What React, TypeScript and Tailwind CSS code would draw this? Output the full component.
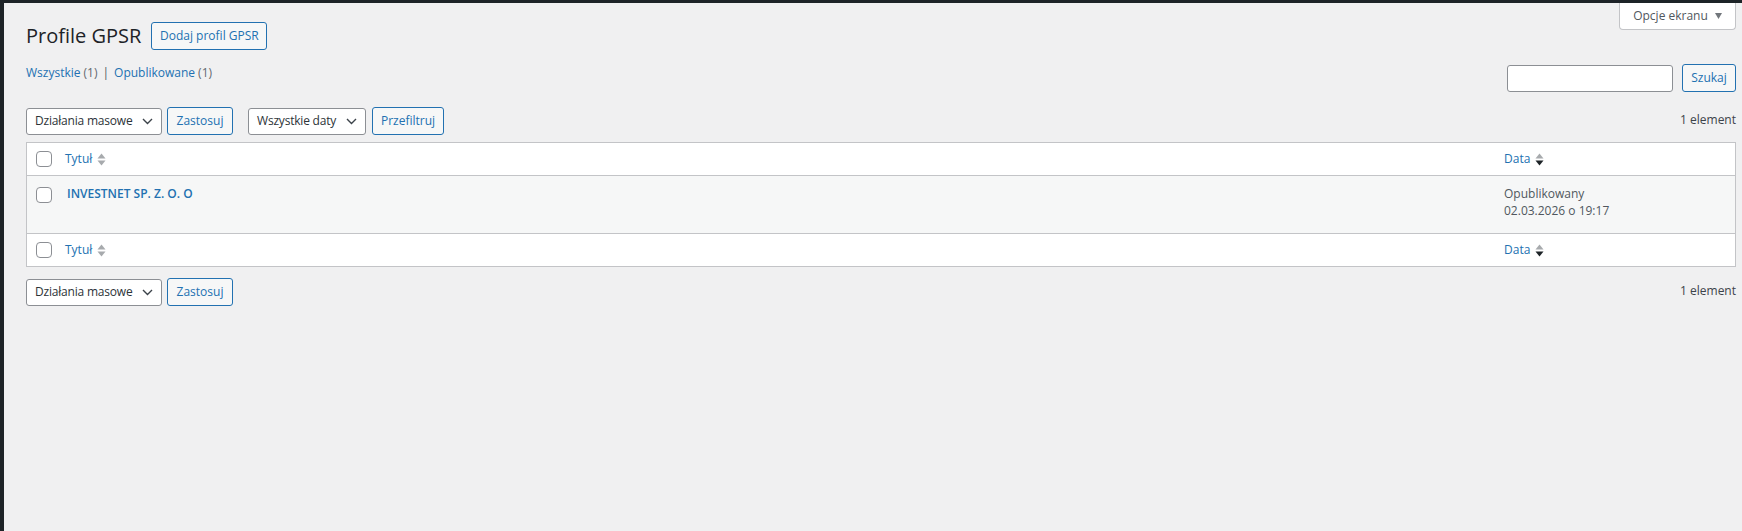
import React from "react";

function SortIcon({ active }: { active?: boolean }) {
  return (
    <svg width="9" height="13" viewBox="0 0 9 13" className="ml-[5px] shrink-0">
      <path d="M4.5 0.5 L8.5 5.5 H0.5 Z" fill="#a7aaad" />
      <path d="M4.5 12.5 L8.5 7.5 H0.5 Z" fill={active ? "#1d2327" : "#a7aaad"} />
    </svg>
  );
}

function Chevron() {
  return (
    <svg width="11" height="7" viewBox="0 0 11 7" className="shrink-0">
      <path d="M1 1 L5.5 5.5 L10 1" fill="none" stroke="#3c434a" strokeWidth="1.4" />
    </svg>
  );
}

function Checkbox() {
  return <span className="block w-[16px] h-[16px] rounded-[4px] border border-[#8c8f94] bg-white" />;
}

function SelectBox({ label, width }: { label: string; width: string }) {
  return (
    <div
      className={`${width} h-[27px] flex items-center justify-between pl-[8px] pr-[8px] bg-white border border-[#8c8f94] rounded-[3px] text-[12px] tracking-[-0.2px] text-[#2c3338] whitespace-nowrap`}
    >
      <span>{label}</span>
      <Chevron />
    </div>
  );
}

function Button({ label, width }: { label: string; width: string }) {
  return (
    <button
      className={`${width} h-[28px] flex items-center justify-center bg-[#f6f7f7] border border-[#2271b1] rounded-[3px] text-[12px] text-[#2271b1] whitespace-nowrap`}
    >
      {label}
    </button>
  );
}

function TableRow({ footer }: { footer?: boolean }) {
  return (
    <div className={`flex h-[33px] items-center bg-white ${footer ? "border-t" : "border-b"} border-[#c3c4c7]`}>
      <div className="w-[38px] pl-[9px]">
        <Checkbox />
      </div>
      <div className="flex-1 flex items-center text-[12px] text-[#2271b1]">
        Tytuł
        <SortIcon />
      </div>
      <div className="w-[231px] flex items-center text-[12px] text-[#2271b1]">
        Data
        <SortIcon active />
      </div>
    </div>
  );
}

function Tablenav({ filters }: { filters?: boolean }) {
  return (
    <div className="flex items-center h-[28px]">
      <SelectBox label="Działania masowe" width="w-[136px]" />
      <div className="ml-[5px]">
        <Button label="Zastosuj" width="w-[66px]" />
      </div>
      {filters && (
        <>
          <div className="ml-[15px]">
            <SelectBox label="Wszystkie daty" width="w-[118px]" />
          </div>
          <div className="ml-[6px]">
            <Button label="Przefiltruj" width="w-[72px]" />
          </div>
        </>
      )}
      <div className="ml-auto text-[12px] text-[#3c434a] -mt-[2px]">1 element</div>
    </div>
  );
}

export default function App() {
  return (
    <div className="relative w-[1742px] h-[531px] overflow-hidden bg-[#f0f0f1] border-t-[3px] border-l-4 border-[#1d2327] font-['Open_Sans',sans-serif]">
      <div className="absolute top-0 right-[6px] w-[117px] h-[27px] flex items-center justify-center gap-[7px] bg-white border border-t-0 border-[#c3c4c7] rounded-b-[4px] text-[12px] text-[#50575e]">
        <span>Opcje ekranu</span>
        <svg width="7" height="6" viewBox="0 0 7 6">
          <path d="M0 0 H7 L3.5 6 Z" fill="#72777c" />
        </svg>
      </div>

      <div className="pl-[22px] pr-[6px]">
        <div className="flex items-center pt-[19px]">
          <h1 className="text-[20px] leading-[28px] text-[#1d2327] font-normal">Profile GPSR</h1>
          <div className="ml-[10px]">
            <Button label="Dodaj profil GPSR" width="w-[116px]" />
          </div>
        </div>

        <div className="flex items-start justify-between mt-[11px]">
          <div className="flex items-center text-[12px] text-[#646970] pt-[3px]">
            <span className="text-[#2271b1]">Wszystkie</span>
            <span className="ml-[3px]">(1)</span>
            <span className="mx-[5px] text-[#50575e]">|</span>
            <span className="text-[#2271b1]">Opublikowane</span>
            <span className="ml-[3px]">(1)</span>
          </div>
          <div className="flex items-center gap-[9px] mt-[3px]">
            <div className="w-[166px] h-[27px] bg-white border border-[#8c8f94] rounded-[3px]" />
            <Button label="Szukaj" width="w-[54px]" />
          </div>
        </div>

        <div className="mt-[15px]">
          <Tablenav filters />
        </div>

        <div className="mt-[7px] border border-[#c3c4c7] bg-white">
          <TableRow />
          <div className="flex h-[57px] items-start bg-[#f6f7f7]">
            <div className="w-[38px] pl-[9px] pt-[11px]">
              <Checkbox />
            </div>
            <div className="flex-1 pt-[9px] pl-[2px] text-[12px] font-semibold text-[#2271b1]">
              INVESTNET SP. Z. O. O
            </div>
            <div className="w-[231px] pt-[9px] text-[12px] leading-[17px] text-[#50575e]">
              <div>Opublikowany</div>
              <div>02.03.2026 o 19:17</div>
            </div>
          </div>
          <TableRow footer />
        </div>

        <div className="mt-[11px]">
          <Tablenav />
        </div>
      </div>
    </div>
  );
}
